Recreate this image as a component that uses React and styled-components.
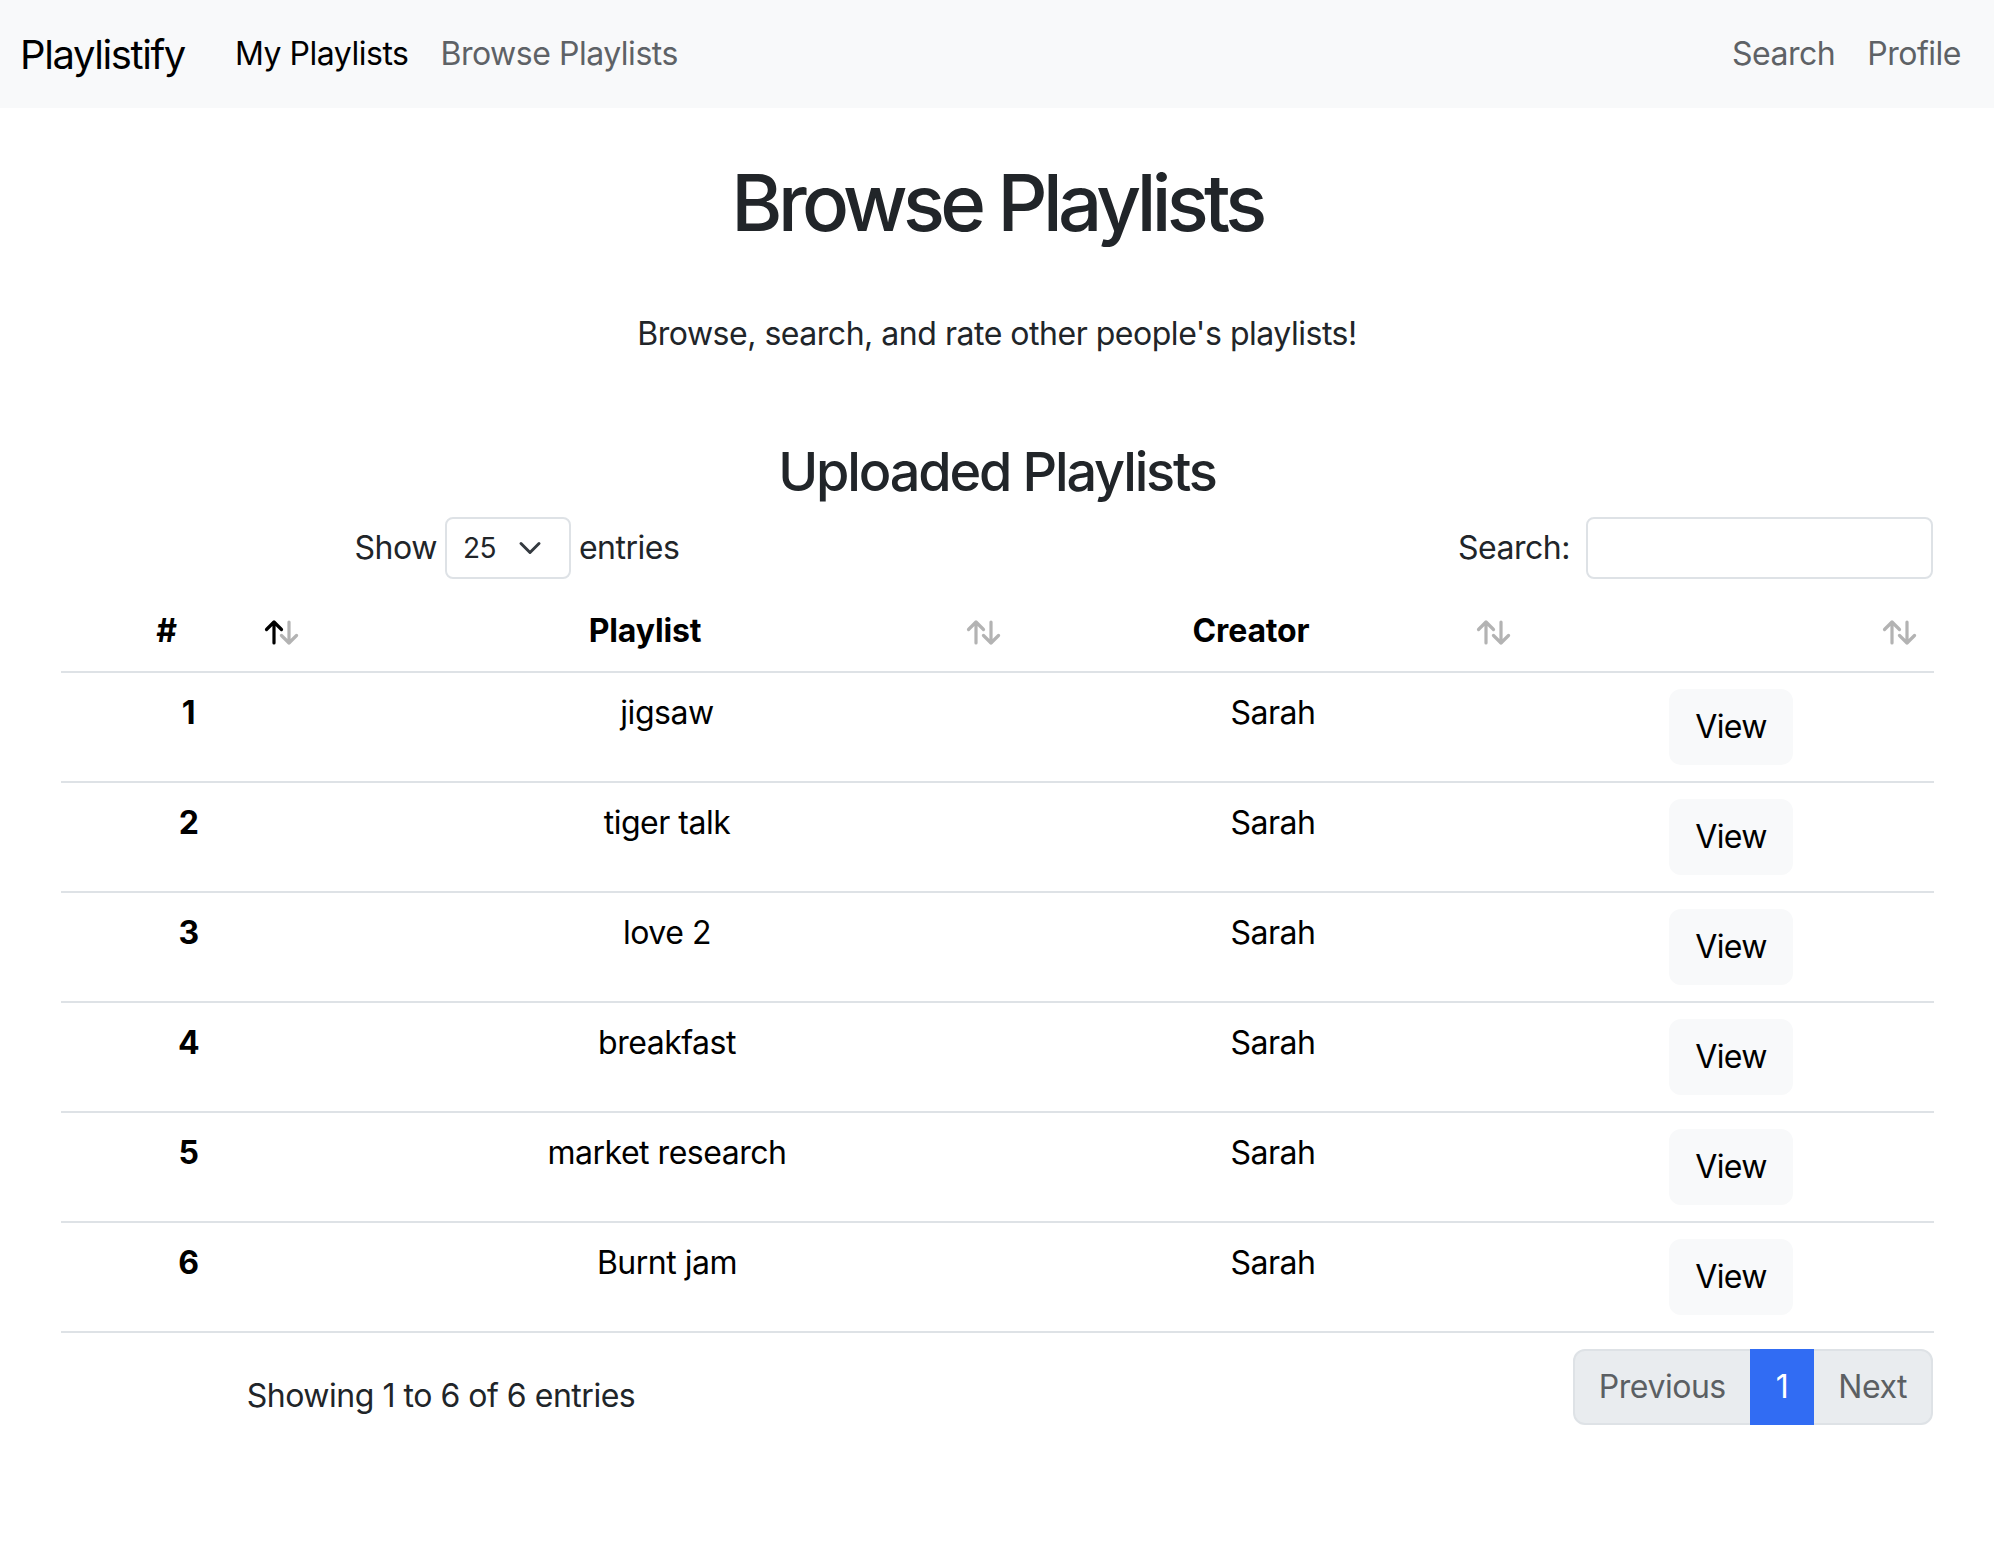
import React from 'react'
import styled, { createGlobalStyle } from 'styled-components'

const GlobalStyle = createGlobalStyle`
  body {
    margin: 0;
    background: #fff;
    color: #212529;
    font-family: Inter, "Noto Sans", sans-serif;
    letter-spacing: -0.03em;
  }
`

const playlists = [
  { id: 1, name: 'jigsaw', creator: 'Sarah' },
  { id: 2, name: 'tiger talk', creator: 'Sarah' },
  { id: 3, name: 'love 2', creator: 'Sarah' },
  { id: 4, name: 'breakfast', creator: 'Sarah' },
  { id: 5, name: 'market research', creator: 'Sarah' },
  { id: 6, name: 'Burnt jam', creator: 'Sarah' },
]

const columns = [
  { label: '#', width: 255, active: true },
  { label: 'Playlist', width: 702 },
  { label: 'Creator', width: 510 },
  { label: '', width: 406 },
]

const SortIcon = ({ active }) => (
  <SortWrap>
    <svg width="20" height="26" viewBox="0 0 20 26">
      <path d="M10 24V3M2.5 10.5 10 3l7.5 7.5" fill="none" stroke={active ? '#000' : '#b3b3b3'} strokeWidth="3.2" strokeLinecap="round" strokeLinejoin="round" />
    </svg>
    <svg width="20" height="26" viewBox="0 0 20 26">
      <path d="M10 3v21M2.5 16.5 10 24l7.5-7.5" fill="none" stroke="#b3b3b3" strokeWidth="3.2" strokeLinecap="round" strokeLinejoin="round" />
    </svg>
  </SortWrap>
)

const App = () => {
  return (
    <>
      <GlobalStyle />
      <Navbar>
        <Brand>Playlistify</Brand>
        <NavGroup $grow>
          <NavLink $active>My Playlists</NavLink>
          <NavLink>Browse Playlists</NavLink>
        </NavGroup>
        <NavGroup>
          <NavLink>Search</NavLink>
          <NavLink>Profile</NavLink>
        </NavGroup>
      </Navbar>

      <Main>
        <Title>Browse Playlists</Title>
        <Lead>Browse, search, and rate other people's playlists!</Lead>
        <SectionTitle>Uploaded Playlists</SectionTitle>

        <ControlsRow>
          <LengthControl>
            Show
            <SelectBox>
              <span>25</span>
              <svg width="24" height="24" viewBox="0 0 16 16">
                <path d="m2 5 6 6 6-6" fill="none" stroke="#343a40" strokeWidth="2" strokeLinecap="round" strokeLinejoin="round" />
              </svg>
            </SelectBox>
            entries
          </LengthControl>
          <FilterControl>
            Search:
            <SearchInput type="text" />
          </FilterControl>
        </ControlsRow>

        <Table>
          <colgroup>
            {columns.map((c, i) => (
              <col key={i} style={{ width: c.width }} />
            ))}
          </colgroup>
          <thead>
            <tr>
              {columns.map((c, i) => (
                <HeadCell key={i}>
                  <HeadInner>
                    <HeadLabel>{c.label}</HeadLabel>
                    <SortIcon active={c.active} />
                  </HeadInner>
                </HeadCell>
              ))}
            </tr>
          </thead>
          <tbody>
            {playlists.map((p) => (
              <tr key={p.id}>
                <RowHead scope="row">{p.id}</RowHead>
                <Cell>{p.name}</Cell>
                <Cell>{p.creator}</Cell>
                <Cell>
                  <ViewButton>View</ViewButton>
                </Cell>
              </tr>
            ))}
          </tbody>
        </Table>

        <FooterRow>
          <Info>Showing 1 to 6 of 6 entries</Info>
          <Pagination>
            <PageItem $disabled>Previous</PageItem>
            <PageItem $active>1</PageItem>
            <PageItem $disabled>Next</PageItem>
          </Pagination>
        </FooterRow>
      </Main>
    </>
  )
}

export default App

const Navbar = styled.nav`
  height: 108px;
  background-color: #f8f9fa;
  display: flex;
  align-items: center;
  padding: 0 17px 0 20px;
  box-sizing: border-box;
`

const Brand = styled.div`
  font-size: 40px;
  letter-spacing: -0.035em;
  color: #000;
  margin-right: 34px;
`

const NavGroup = styled.div`
  display: flex;
  flex-grow: ${(p) => (p.$grow ? 1 : 0)};
`

const NavLink = styled.a`
  font-size: 32px;
  line-height: 48px;
  padding: 0 16px;
  color: ${(p) => (p.$active ? '#000' : '#5e6266')};
  text-decoration: none;
`

const Main = styled.main`
  width: 1872px;
  margin: 0 auto;
  padding-top: 47px;
  text-align: center;
`

const Title = styled.h1`
  font-size: 78px;
  letter-spacing: -0.06em;
  line-height: 96px;
  font-weight: 500;
  margin: 0 0 59px;
`

const Lead = styled.p`
  font-size: 32px;
  line-height: 48px;
  margin: 0 0 80px;
`

const SectionTitle = styled.h3`
  font-size: 54px;
  letter-spacing: -0.04em;
  line-height: 67px;
  font-weight: 500;
  margin: 0 0 12px;
`

const ControlsRow = styled.div`
  display: grid;
  grid-template-columns: 1fr 1fr;
  column-gap: 48px;
  height: 62px;
  font-size: 32px;
  line-height: 48px;
`

const LengthControl = styled.label`
  display: flex;
  align-items: center;
  justify-content: center;
  gap: 8px;
`

const SelectBox = styled.div`
  display: flex;
  align-items: center;
  justify-content: space-between;
  width: 126px;
  height: 62px;
  box-sizing: border-box;
  border: 2px solid #dee2e6;
  border-radius: 8px;
  padding: 0 27px 0 16px;
  font-size: 28px;
`

const FilterControl = styled.label`
  display: flex;
  align-items: center;
  justify-content: flex-end;
  gap: 16px;
`

const SearchInput = styled.input`
  width: 347px;
  height: 62px;
  box-sizing: border-box;
  border: 2px solid #dee2e6;
  border-radius: 8px;
  font-size: 28px;
  padding: 0 16px;
  :focus {
    outline: none;
  }
`

const Table = styled.table`
  width: 1872px;
  table-layout: fixed;
  border-collapse: collapse;
  margin: 12px 0;
  color: #000;
  font-size: 32px;
  line-height: 48px;
`

const HeadCell = styled.th`
  padding: 16px;
  border-bottom: 2px solid #dee2e6;
  font-weight: 700;
  letter-spacing: -0.005em;
`

const HeadInner = styled.div`
  display: flex;
  align-items: center;
`

const HeadLabel = styled.span`
  flex-grow: 1;
  text-align: center;
`

const SortWrap = styled.span`
  display: flex;
  justify-content: flex-end;
  width: 44px;
  padding-right: 1px;
  box-sizing: border-box;
  margin-top: 2px;
  svg + svg {
    margin-left: -5px;
  }
`

const Cell = styled.td`
  padding: 16px;
  text-align: center;
  vertical-align: top;
  border-bottom: 2px solid #dee2e6;
`

const RowHead = styled.th`
  padding: 16px;
  text-align: center;
  vertical-align: top;
  font-weight: 700;
  border-bottom: 2px solid #dee2e6;
`

const ViewButton = styled.button`
  font-family: inherit;
  font-size: 32px;
  letter-spacing: -0.02em;
  line-height: 48px;
  padding: 12px 24px;
  color: #000;
  background-color: #f8f9fa;
  border: 2px solid #f8f9fa;
  border-radius: 12px;
`

const FooterRow = styled.div`
  display: grid;
  grid-template-columns: 5fr 7fr;
  column-gap: 48px;
  font-size: 32px;
  line-height: 48px;
`

const Info = styled.div`
  padding-top: 27px;
`

const Pagination = styled.div`
  display: flex;
  justify-content: flex-end;
  align-items: flex-start;
  margin-top: 4px;
`

const PageItem = styled.span`
  padding: 12px 24px;
  font-size: 32px;
  line-height: 48px;
  border: 2px solid ${(p) => (p.$active ? '#316cf3' : '#dee2e6')};
  background-color: ${(p) => (p.$active ? '#316cf3' : '#e9ecef')};
  color: ${(p) => (p.$active ? '#fff' : '#5b5f63')};
  margin-left: -2px;
  position: relative;
  z-index: ${(p) => (p.$active ? 1 : 0)};
  &:first-child {
    border-radius: 12px 0 0 12px;
  }
  &:last-child {
    border-radius: 0 12px 12px 0;
  }
`
